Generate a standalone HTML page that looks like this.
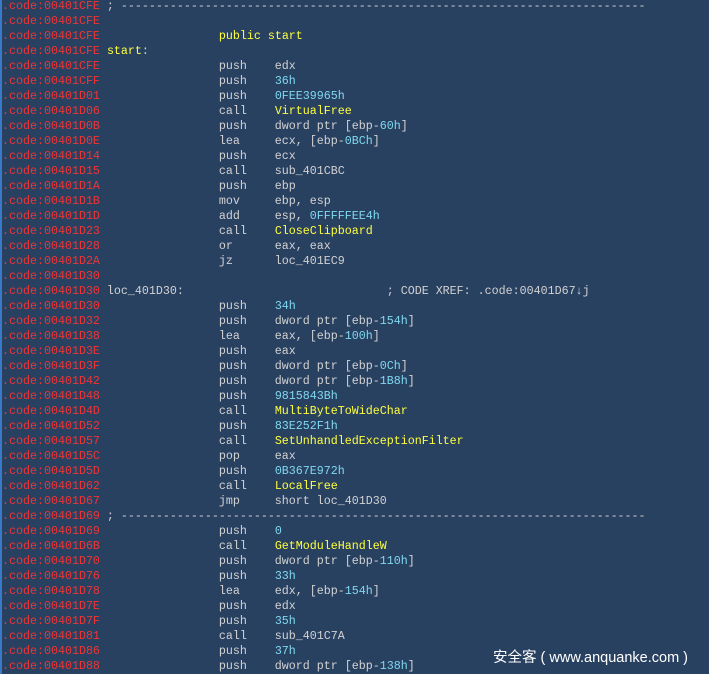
<!DOCTYPE html>
<html><head><meta charset="utf-8"><style>
html,body{margin:0;padding:0;width:709px;height:674px;overflow:hidden;background:#294161;}
.b{position:absolute;left:0;top:0;width:2px;height:674px;background:#3a78c8;}
pre{position:absolute;left:2px;top:-1px;margin:0;font-family:"Liberation Mono",monospace;font-size:11.67px;line-height:15px;color:#d2d2d2;}
.a{color:#f03434}.y{color:#ffff3c}.c{color:#7fd8f0}
.w{position:absolute;left:493px;top:646px;font-family:"Liberation Sans","Noto Sans CJK SC",sans-serif;font-size:14.5px;color:#fff;}
</style></head><body><div class="b"></div>
<pre><span class="a">.code:00401CFE</span> ; ---------------------------------------------------------------------------
<span class="a">.code:00401CFE</span>
<span class="a">.code:00401CFE</span>                 <span class="y">public start</span>
<span class="a">.code:00401CFE</span> <span class="y">start</span>:
<span class="a">.code:00401CFE</span>                 push    edx
<span class="a">.code:00401CFF</span>                 push    <span class="c">36h</span>
<span class="a">.code:00401D01</span>                 push    <span class="c">0FEE39965h</span>
<span class="a">.code:00401D06</span>                 call    <span class="y">VirtualFree</span>
<span class="a">.code:00401D0B</span>                 push    dword ptr [ebp-<span class="c">60h</span>]
<span class="a">.code:00401D0E</span>                 lea     ecx, [ebp-<span class="c">0BCh</span>]
<span class="a">.code:00401D14</span>                 push    ecx
<span class="a">.code:00401D15</span>                 call    sub_401CBC
<span class="a">.code:00401D1A</span>                 push    ebp
<span class="a">.code:00401D1B</span>                 mov     ebp, esp
<span class="a">.code:00401D1D</span>                 add     esp, <span class="c">0FFFFFEE4h</span>
<span class="a">.code:00401D23</span>                 call    <span class="y">CloseClipboard</span>
<span class="a">.code:00401D28</span>                 or      eax, eax
<span class="a">.code:00401D2A</span>                 jz      loc_401EC9
<span class="a">.code:00401D30</span>
<span class="a">.code:00401D30</span> loc_401D30:                             ; CODE XREF: .code:00401D67↓j
<span class="a">.code:00401D30</span>                 push    <span class="c">34h</span>
<span class="a">.code:00401D32</span>                 push    dword ptr [ebp-<span class="c">154h</span>]
<span class="a">.code:00401D38</span>                 lea     eax, [ebp-<span class="c">100h</span>]
<span class="a">.code:00401D3E</span>                 push    eax
<span class="a">.code:00401D3F</span>                 push    dword ptr [ebp-<span class="c">0Ch</span>]
<span class="a">.code:00401D42</span>                 push    dword ptr [ebp-<span class="c">1B8h</span>]
<span class="a">.code:00401D48</span>                 push    <span class="c">9815843Bh</span>
<span class="a">.code:00401D4D</span>                 call    <span class="y">MultiByteToWideChar</span>
<span class="a">.code:00401D52</span>                 push    <span class="c">83E252F1h</span>
<span class="a">.code:00401D57</span>                 call    <span class="y">SetUnhandledExceptionFilter</span>
<span class="a">.code:00401D5C</span>                 pop     eax
<span class="a">.code:00401D5D</span>                 push    <span class="c">0B367E972h</span>
<span class="a">.code:00401D62</span>                 call    <span class="y">LocalFree</span>
<span class="a">.code:00401D67</span>                 jmp     short loc_401D30
<span class="a">.code:00401D69</span> ; ---------------------------------------------------------------------------
<span class="a">.code:00401D69</span>                 push    <span class="c">0</span>
<span class="a">.code:00401D6B</span>                 call    <span class="y">GetModuleHandleW</span>
<span class="a">.code:00401D70</span>                 push    dword ptr [ebp-<span class="c">110h</span>]
<span class="a">.code:00401D76</span>                 push    <span class="c">33h</span>
<span class="a">.code:00401D78</span>                 lea     edx, [ebp-<span class="c">154h</span>]
<span class="a">.code:00401D7E</span>                 push    edx
<span class="a">.code:00401D7F</span>                 push    <span class="c">35h</span>
<span class="a">.code:00401D81</span>                 call    sub_401C7A
<span class="a">.code:00401D86</span>                 push    <span class="c">37h</span>
<span class="a">.code:00401D88</span>                 push    dword ptr [ebp-<span class="c">138h</span>]
</pre>
<div class="w">安全客 ( www.anquanke.com )</div>
</body></html>
